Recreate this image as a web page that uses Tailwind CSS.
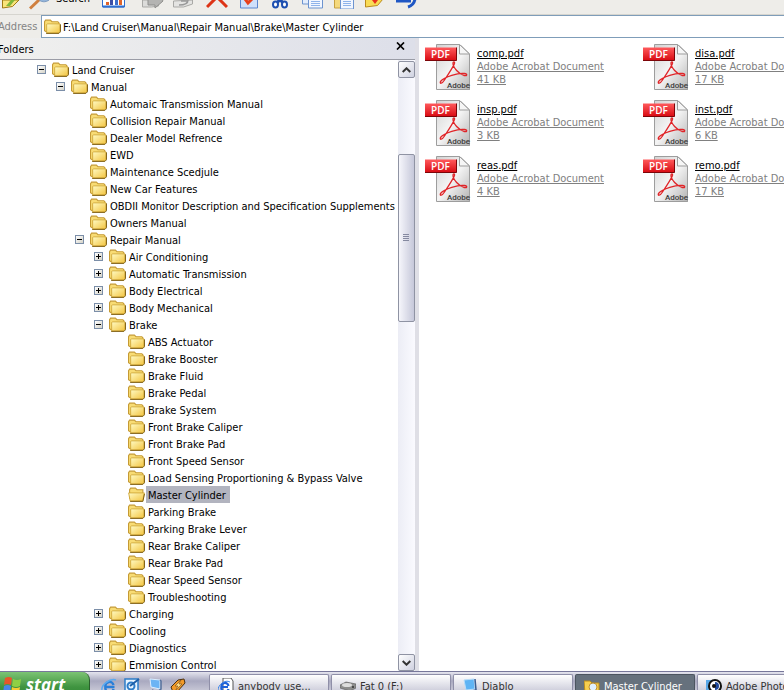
<!DOCTYPE html>
<html lang="en">

<head>
    <meta charset="UTF-8">
    <meta name="viewport" content="width=device-width, initial-scale=1.0">
    <title>Master Cylinder</title>
    <script src="https://cdn.jsdelivr.net/npm/@tailwindcss/browser@4"></script>
</head>

<body class="h-screen flex flex-col overflow-hidden bg-white text-black text-[11px] leading-[17px] font-['Tahoma','DejaVu_Sans_Condensed',sans-serif]">

    <!-- Shared icons -->
    <svg class="absolute size-0">
        <defs>
            <linearGradient id="folderFill" x1="0" y1="0" x2="1" y2="1">
                <stop offset="0" stop-color="#fffbc4" />
                <stop offset="1" stop-color="#f3c440" />
            </linearGradient>
            <linearGradient id="pageFill" x1="0" y1="0" x2="1" y2="1">
                <stop offset="0" stop-color="#d2d2d2" />
                <stop offset=".5" stop-color="#f4f4f4" />
                <stop offset="1" stop-color="#b4b4b4" />
            </linearGradient>
            <linearGradient id="bannerFill" x1="0" y1="0" x2="0" y2="1">
                <stop offset="0" stop-color="#ff5a5c" />
                <stop offset="1" stop-color="#d80a12" />
            </linearGradient>
            <symbol id="folder" viewBox="0 0 16 16">
                <path d="M.5 12V3.500l1-1.500h4.500l1.500 1.500h5.500l1 1v8.500H2z" fill="#f8dc74" stroke="#c59a34" />
                <path d="M2.500 6l1-.5h11.500v7l-1 1.500H2.500z" fill="url(#folderFill)" stroke="#cfa434" stroke-width=".8" />
                <path d="M2 14.500h12l1.500-1.500V6" fill="none" stroke="#7d5c10" stroke-width=".9" />
            </symbol>
            <symbol id="folderOpen" viewBox="0 0 16 16">
                <path d="M1.500 12V3.500l1-1.500h4.500l1.500 1.500h5.500v9" fill="#f8dc74" stroke="#c59a34" />
                <path d="M.6 6.500h14.800l-1.500 7.500H2z" fill="url(#folderFill)" stroke="#cfa434" stroke-width=".8" />
                <path d="M2 14.500h12l1.500-7" fill="none" stroke="#7d5c10" stroke-width=".9" />
            </symbol>
            <symbol id="pdf" viewBox="0 0 48 48">
                <path d="M13 2h24l9 9v36H13z" fill="#777" opacity=".5" />
                <path d="M12.500 1.500h23l10 9.500v35.500h-33z" fill="url(#pageFill)" stroke="#9d9d9d" />
                <path d="M35.500 1.500v9.500h10z" fill="#f6f6f6" stroke="#9d9d9d" />
                <path d="M16.500 38.500c-1 2.500 1.500 2.500 4-1.500 4-6 9-13.500 10-16.500.500-2-1.500-2.500-1.500 0 0 4 6 10.500 11 12 3 .8 4-1.500.5-2-6-.8-20 3-24 8z" fill="none" stroke="#e02428" stroke-width="1.300" />
                <path d="M1 4.500h31.500v13H1z" fill="url(#bannerFill)" />
                <path d="M1 17.500h31.500v-13" fill="none" stroke="#7c0509" />
                <text x="7" y="15" fill="#fff" font-family="Open Sans" font-size="10" font-weight="600">PDF</text>
                <text x="23" y="45" fill="#3c3c3c" font-family="Roboto" font-size="8" font-weight="500">Adobe</text>
            </symbol>
        </defs>
    </svg>

    <!-- Toolbar -->
    <div class="h-[15px] shrink-0 flex items-start overflow-hidden bg-[#eeede9] border-b border-[#d6d5cf]">
        <button type="button" aria-label="Up" class="ml-[2px]">
            <svg width="18" height="10" viewBox="0 0 18 10"><path d="M.5 0v8l10-1.500L17 0z" fill="#f9e47a" stroke="#a07a14" /><path d="M4 6l5-6h4L8 6z" fill="#7fb83a" /></svg>
        </button>
        <button type="button" class="ml-[9px] flex items-start">
            <svg width="22" height="10" viewBox="0 0 22 10"><path d="M10 0a7 6 0 0 0 10 0z" fill="#a8cdf4" stroke="#7e9cc0" /><path d="M1 8.500L10 0" stroke="#d0803f" stroke-width="3" /></svg>
            <span class="-mt-[10px] ml-[5px] leading-[17px]">Search</span>
        </button>
        <button type="button" aria-label="Views" class="ml-[12px]">
            <svg width="23" height="8" viewBox="0 0 23 8"><path d="M.5-1h22v8H.5z" fill="#fff" stroke="#2f6fd0" /><path d="M1 6.500h21" stroke="#2f6fd0" stroke-width="2" /><path d="M4 2h3v3H4zM17 0h3v5h-3z" fill="#e0632a" /><path d="M8 0h3v5H8z" fill="#3d4fa5" /><path d="M13 0h3v5h-3z" fill="#3d6fcc" /></svg>
        </button>
        <button type="button" aria-label="Move to" class="ml-[17px]">
            <svg width="22" height="9" viewBox="0 0 22 9"><path d="M.5 0v7h9l7-1V0z" fill="#dcdcda" stroke="#a9a9a6" /><path d="M6 5h7v3l8-7-1-2H6z" fill="#b4b4b2" stroke="#8f8f8d" /></svg>
        </button>
        <button type="button" aria-label="Copy to" class="ml-[9px]">
            <svg width="22" height="9" viewBox="0 0 22 9"><path d="M.5 1v6h10l9-3V0z" fill="#e4e4e2" stroke="#a9a9a6" /><path d="M6 5c5 0 9-1 9-5M8 1h6" fill="none" stroke="#999" stroke-width="1.500" /></svg>
        </button>
        <button type="button" aria-label="Delete" class="ml-[11px]">
            <svg width="22" height="9" viewBox="0 0 22 9"><path d="M1 7L11-3l10 10" fill="none" stroke="#dd3416" stroke-width="3" /></svg>
        </button>
        <button type="button" aria-label="Properties" class="ml-[12px]">
            <svg width="19" height="9" viewBox="0 0 19 9"><path d="M.5-1h17v9H.5z" fill="#cfe0fb" stroke="#5b86cf" /><path d="M5-1l3 4 4-4" fill="none" stroke="#e8401c" stroke-width="3" /></svg>
        </button>
        <button type="button" aria-label="Cut" class="ml-[12px]">
            <svg width="18" height="9" viewBox="0 0 18 9"><path d="M10-2L6 3M8-2l4 5" stroke="#1d4fb0" stroke-width="3" /><ellipse cx="4.500" cy="4.500" rx="2.500" ry="3" fill="#fff" stroke="#1d4fb0" stroke-width="2" /><ellipse cx="13.500" cy="4.500" rx="2.500" ry="3" fill="#fff" stroke="#1d4fb0" stroke-width="2" /></svg>
        </button>
        <button type="button" aria-label="Copy" class="ml-[13px]">
            <svg width="22" height="9" viewBox="0 0 22 9"><path d="M.5-1h9v5h-9z" fill="#e3edfc" stroke="#6d94cf" /><path d="M6.500-1h14v9h-14z" fill="#f2f7ff" stroke="#6d94cf" /><path d="M9 1.500h9M9 3.500h9M9 5.500h9" stroke="#8fb4ea" /></svg>
        </button>
        <button type="button" aria-label="Paste" class="ml-[10px]">
            <svg width="21" height="9" viewBox="0 0 21 9"><path d="M.5-1h12v9H.5z" fill="#f5d97c" stroke="#c7a141" /><path d="M6.500-1h13v10h-13z" fill="#f2f7ff" stroke="#6d94cf" /><path d="M9 1.500h8M9 3.500h8M9 5.500h8" stroke="#8fb4ea" /></svg>
        </button>
        <button type="button" aria-label="Favorites" class="ml-[9px]">
            <svg width="21" height="9" viewBox="0 0 21 9"><path d="M1.500-1v8l12-1.500 5.500-6.500z" fill="#f9dc55" stroke="#bb8b1c" /><path d="M8 0h6l-3 4z" fill="#e8301c" /></svg>
        </button>
        <button type="button" aria-label="Undo" class="ml-[11px]">
            <svg width="22" height="9" viewBox="0 0 22 9"><path d="M0 1h15M12 7q6-2 7-8" fill="none" stroke="#1f57c4" stroke-width="3" /></svg>
        </button>
    </div>

    <!-- Address bar -->
    <div class="h-[23px] shrink-0 flex bg-[#eeede9]">
        <label for="address" class="w-[41px] -ml-[2px] mr-[2px] pt-[3px] text-[#848484]">Address</label>
        <div class="flex-1 flex items-center gap-[2px] pl-[2px] bg-white border border-r-0 border-[#7f9db9]">
            <svg width="17" height="17"><use href="#folder" /></svg>
            <input id="address" type="text" value="F:\Land Cruiser\Manual\Repair Manual\Brake\Master Cylinder" class="flex-1 pt-px outline-none">
        </div>
    </div>

    <div class="flex-1 min-h-0 flex">
        <!-- Folders pane -->
        <div class="w-[419px] shrink-0 flex flex-col border-r-4 border-[#dfdfe6]">
            <div class="h-[22px] shrink-0 flex items-center justify-between pr-[10px] bg-linear-to-r from-[#f0f0ee] to-[#dddfe9] border-b border-[#9a9ca6]">
                <h2 class="-ml-[2px] pt-px">Folders</h2>
                <button type="button" aria-label="Close">
                    <svg width="9" height="8" viewBox="0 0 9 8" class="mb-[6px]"><path d="M1 .5l7 7M8 .5l-7 7" stroke="#000" stroke-width="1.700" /></svg>
                </button>
            </div>
            <div class="flex-1 min-h-0 flex">
                <div id="tree" class="flex-1 min-w-0 overflow-hidden pt-px pl-[37px]"></div>
                <div class="w-[17px] flex flex-col pt-px bg-linear-to-r from-[#ecedf5] to-[#fafaff]">
                    <button type="button" aria-label="Scroll up" class="size-[17px] grid place-items-center rounded-xs border border-[#8f93a3] bg-linear-to-br from-white to-[#cfd1e0]">
                        <svg width="9" height="6" viewBox="0 0 9 6"><path d="M.7 5l3.800-3.700L8.300 5" fill="none" stroke="#333" stroke-width="2" /></svg>
                    </button>
                    <div class="flex-[76_1_0%]"></div>
                    <div class="flex-[167_1_0%] grid place-items-center rounded-xs border border-[#8f93a3] bg-linear-to-r from-[#f6f6fb] to-[#c6c8da]">
                        <svg width="7" height="8" viewBox="0 0 7 8"><path d="M0 .5h6M0 2.500h6M0 4.500h6M0 6.500h6" stroke="#8589a0" /></svg>
                    </div>
                    <div class="flex-[333_1_0%]"></div>
                    <button type="button" aria-label="Scroll down" class="size-[17px] grid place-items-center rounded-xs border border-[#8f93a3] bg-linear-to-br from-white to-[#cfd1e0]">
                        <svg width="9" height="6" viewBox="0 0 9 6"><path d="M.7 1l3.800 3.700L8.300 1" fill="none" stroke="#333" stroke-width="2" /></svg>
                    </button>
                </div>
            </div>
        </div>

        <!-- Files -->
        <div class="flex-1 min-w-0 overflow-hidden pt-[5px] pl-[5px]">
            <div id="files" class="grid grid-cols-[218px_218px] auto-rows-[56px]"></div>
        </div>
    </div>

    <!-- Taskbar -->
    <div class="h-[19px] shrink-0 flex overflow-hidden border-t border-[#77779a] bg-linear-to-b from-[#e4e4ee] via-[#a9a9c0] to-[#c5c5d4]">
        <button type="button" class="w-[90px] h-[30px] shrink-0 flex items-start pl-[3px] pt-[4px] rounded-tr-lg bg-linear-to-b from-[#7cc474] via-[#3f9440] to-[#2e8030] border-r border-[#2a5f2c]">
            <svg width="20" height="18" viewBox="0 0 20 18"><path d="M2 2q4-2 7 0L8 9q-4-2-7 0z" fill="#e8552a" /><path d="M10 3q4 2 8 0l-1 7q-4 2-8 0z" fill="#8fd044" /><path d="M1 10q4-2 7 0l-1 7q-3-2-7 0z" fill="#4a86e8" /><path d="M9 11q4 2 8 0l-1 7q-4 1-8 0z" fill="#f8cc34" /></svg>
            <span class="ml-[3px] text-[17px] leading-[18px] font-bold italic text-white font-['Open_Sans',sans-serif]">start</span>
        </button>
        <div class="w-[119px] shrink-0 flex items-start gap-[7px] pl-[11px] pt-[6px]">
            <svg width="16" height="16" viewBox="0 0 16 16"><path d="M13.500 9H4.500a4 4 0 0 1 8-2M4.500 9a4 4 0 0 0 8 2" fill="none" stroke="#2a7fd8" stroke-width="2.500" /><path d="M1 12C0 7 9 0 15 2" fill="none" stroke="#5aaaf0" stroke-width="1.500" /></svg>
            <svg width="16" height="16" viewBox="0 0 16 16"><path d="M1 1h13v14H1z" fill="#e8f4ff" stroke="#2d7cc8" stroke-width="1.500" /><circle cx="7" cy="8" r="3.500" fill="none" stroke="#2d7cc8" stroke-width="2" /><path d="M6 8l9-7" stroke="#1d5fa8" stroke-width="2" /></svg>
            <svg width="16" height="16" viewBox="0 0 16 16"><path d="M3 1l10 1v9L4 9z" fill="#6cb4f4" stroke="#dceeff" /><path d="M13 2l1 1v8l-4 3-5-2" fill="none" stroke="#54709c" stroke-width="1.500" /></svg>
            <svg width="16" height="16" viewBox="0 0 16 16"><path d="M1 9l7-7 6-1 1 4-8 9-4 0z" fill="#f39a28" stroke="#4a3010" /><path d="M11 2L5 8h3l-3 5 7-7H9z" fill="#ffe08a" stroke="#7a4a10" stroke-width=".6" /></svg>
        </div>
        <div id="tasks" class="flex items-start gap-[2px] pt-[2px]"></div>
    </div>

    <script>
        const folders = [
            { name: 'Land Cruiser', open: true, children: [
                { name: 'Manual', open: true, children: [
                    { name: 'Automaic Transmission Manual' },
                    { name: 'Collision Repair Manual' },
                    { name: 'Dealer Model Refrence' },
                    { name: 'EWD' },
                    { name: 'Maintenance Scedjule' },
                    { name: 'New Car Features' },
                    { name: 'OBDII Monitor Description and Specification Supplements' },
                    { name: 'Owners Manual' },
                    { name: 'Repair Manual', open: true, children: [
                        { name: 'Air Conditioning', open: false },
                        { name: 'Automatic Transmission', open: false },
                        { name: 'Body Electrical', open: false },
                        { name: 'Body Mechanical', open: false },
                        { name: 'Brake', open: true, children: [
                            { name: 'ABS Actuator' },
                            { name: 'Brake Booster' },
                            { name: 'Brake Fluid' },
                            { name: 'Brake Pedal' },
                            { name: 'Brake System' },
                            { name: 'Front Brake Caliper' },
                            { name: 'Front Brake Pad' },
                            { name: 'Front Speed Sensor' },
                            { name: 'Load Sensing Proportioning & Bypass Valve' },
                            { name: 'Master Cylinder', selected: true },
                            { name: 'Parking Brake' },
                            { name: 'Parking Brake Lever' },
                            { name: 'Rear Brake Caliper' },
                            { name: 'Rear Brake Pad' },
                            { name: 'Rear Speed Sensor' },
                            { name: 'Troubleshooting' },
                        ] },
                        { name: 'Charging', open: false },
                        { name: 'Cooling', open: false },
                        { name: 'Diagnostics', open: false },
                        { name: 'Emmision Control', open: false },
                    ] },
                ] },
            ] },
        ];

        const files = [
            { name: 'comp.pdf', size: '41 KB' },
            { name: 'disa.pdf', size: '17 KB' },
            { name: 'insp.pdf', size: '3 KB' },
            { name: 'inst.pdf', size: '6 KB' },
            { name: 'reas.pdf', size: '4 KB' },
            { name: 'remo.pdf', size: '17 KB' },
        ];

        const tasks = [
            { name: 'anybody use...', icon: '<path d="M5 0h8l2 3v12H5z" fill="#fff" stroke="#555" /><path d="M10 9H3.500a3.500 3.500 0 0 1 7-1M3.500 9a3.500 3.500 0 0 0 7 2" fill="none" stroke="#1d62d8" stroke-width="2.200" /><path d="M0 12C0 7 7 1 12 4" fill="none" stroke="#3a84e8" />' },
            { name: 'Fat 0 (F:)', icon: '<path d="M0 7l6-3 10 2v4l-6 3-10-3z" fill="#8d8d8d" stroke="#555" stroke-width=".6" /><ellipse cx="7" cy="7" rx="5" ry="2" fill="#ddd" /><circle cx="13" cy="9" r="1" fill="#333" />' },
            { name: 'Diablo', icon: '<path d="M2 2l10-1 1 10-9 1z" fill="#5fb4f4" stroke="#b8dcf8" /><path d="M13 1l1 11-8 2" fill="none" stroke="#3a5c90" stroke-width="1.500" />' },
            { name: 'Master Cylinder', active: true, icon: '<path d="M0 3h6l2 2h7v10H1z" fill="#f7cf4e" stroke="#b98c1c" /><circle cx="9" cy="9" r="4" fill="#dff0ff" stroke="#c09030" />' },
            { name: 'Adobe Photoshop', icon: '<path d="M0 2h8v12H0z" fill="#58a8e8" /><circle cx="9" cy="8" r="6" fill="#fff" stroke="#111" stroke-width="2" /><path d="M9 4a4 4 0 0 1 0 8z" fill="#204a9c" /><circle cx="8" cy="8" r="2" fill="#111" />' },
        ];

        function renderFolders(list) {
            let html = '<ul>';
            list.forEach((folder) => {
                const toggle = folder.open === undefined
                    ? '<span class="w-[9px] shrink-0"></span>'
                    : `<button type="button" aria-label="Toggle ${folder.name}" class="size-[9px] shrink-0 border border-[#7b8ea8] bg-linear-to-br from-white to-[#d5d3c8]">
                            <svg width="7" height="7" viewBox="0 0 7 7"><path d="${folder.open ? 'M1 3.500h5' : 'M1 3.500h5M3.500 1v5'}" stroke="#000" /></svg>
                       </button>`;
                html += `<li>
                    <div class="h-[17px] flex items-center whitespace-nowrap">
                        ${toggle}
                        <svg width="17" height="17" class="shrink-0 ml-[6px] mr-px"><use href="${folder.selected ? '#folderOpen' : '#folder'}" /></svg>
                        <a href="#" class="pt-[2px] leading-[15px] px-[2px] ${folder.selected ? 'pr-[4px] bg-[#b2b4bf]' : ''}">${folder.name.replace('&', '&amp;')}</a>
                    </div>
                    ${folder.children ? `<div class="pl-[19px]">${renderFolders(folder.children)}</div>` : ''}
                </li>`;
            });
            return html + '</ul>';
        }

        document.getElementById('tree').innerHTML = renderFolders(folders);

        document.getElementById('files').innerHTML = files.map((file) => `
            <a href="#" class="flex items-start gap-[5px] leading-[13px] whitespace-nowrap">
                <svg width="48" height="48" class="shrink-0"><use href="#pdf" /></svg>
                <span class="pt-[4px] flex flex-col items-start text-[#808080]">
                    <span class="text-black underline">${file.name}</span>
                    <span class="underline">Adobe Acrobat Document</span>
                    <span class="underline">${file.size}</span>
                </span>
            </a>`).join('');

        document.getElementById('tasks').innerHTML = tasks.map((task) => `
            <button type="button" class="w-[120px] h-[24px] shrink-0 flex items-start gap-[4px] pl-[8px] pt-[3px] rounded-t-xs border border-b-0 whitespace-nowrap ${task.active ? 'bg-[#66717d] border-[#4c5560] text-white' : 'bg-linear-to-b from-white to-[#b9b9cc] border-[#8f8fa8] text-[#333]'}">
                <svg width="16" height="16" viewBox="0 0 16 16">${task.icon}</svg>
                ${task.name}
            </button>`).join('');
    </script>
</body>

</html>
